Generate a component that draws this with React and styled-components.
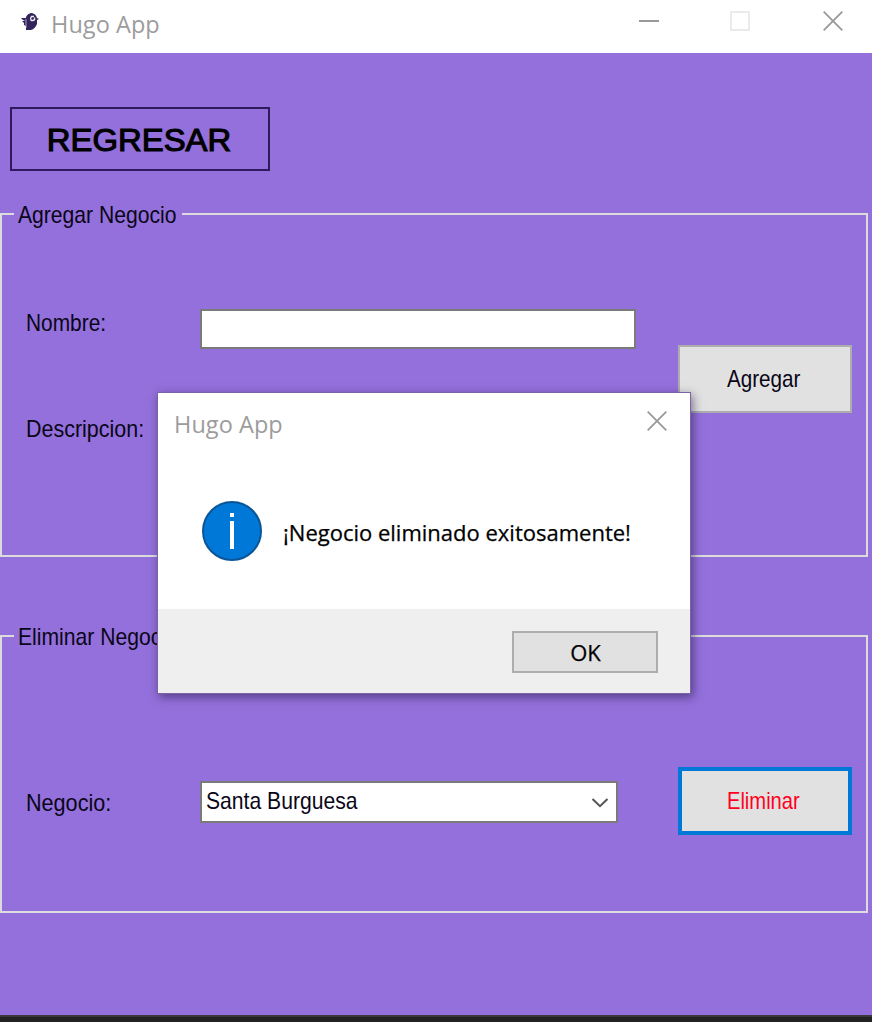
import React from "react";
import styled, { createGlobalStyle } from "styled-components";

const GlobalStyle = createGlobalStyle`
  * { box-sizing: border-box; }
  body { margin: 0; background: #9370db; overflow: hidden; }
  button, input { font: inherit; margin: 0; border-radius: 0; }
`;

const formFont = `"Liberation Sans", Arial, sans-serif`;
const uiFont = `"Open Sans", "Noto Sans", sans-serif`;

const Window = styled.div`
  position: relative;
  display: flex;
  flex-direction: column;
  width: 872px;
  height: 1022px;
  overflow: hidden;
  background: #9370db;
`;

const TitleBar = styled.header`
  display: flex;
  align-items: center;
  flex: none;
  height: ${(p) => p.$height}px;
  padding: ${(p) => p.$padding};
  background: #fff;
`;

const Title = styled.span`
  flex: 1;
  padding: ${(p) => p.$padding};
  font: 400 23.5px/32px ${uiFont};
  letter-spacing: 0.05px;
  color: #9c9c9c;
  white-space: nowrap;
`;

const Controls = styled.div`
  display: flex;
  align-items: center;
`;

const Icon = styled.svg`
  display: block;
  flex: none;
  margin: ${(p) => p.$margin || 0};
`;

const Text = styled.span`
  display: inline-block;
  white-space: nowrap;
  transform: scaleX(${(p) => p.$scale || 0.88});
  transform-origin: ${(p) => p.$origin || "left"} center;
`;

const Content = styled.main`
  display: flex;
  flex-direction: column;
  flex: 1;
  padding-top: 54px;
  font: 24px/28px ${formFont};
  color: #0a0618;
`;

const BackButton = styled.button`
  width: 260px;
  height: 64px;
  margin-left: 10px;
  padding: 4px 2px 0 0;
  flex: none;
  border: 2px solid #2e1a5c;
  background: transparent;
  font-size: 31px;
  line-height: 36px;
  color: #000;
  -webkit-text-stroke: 1.1px #000;
`;

const Group = styled.fieldset`
  width: 868px;
  height: ${(p) => p.$height}px;
  margin: ${(p) => p.$top}px 0 0;
  padding: 0;
  min-width: 0;
  border: 2px solid #dcdcdc;
`;

const Legend = styled.legend`
  width: 168px;
  height: 28px;
  margin-left: 12px;
  padding: 0 0 0 4px;
  line-height: 30px;
`;

const Row = styled.div`
  display: flex;
  align-items: flex-start;
  padding: ${(p) => p.$top}px 14px 0 24px;
`;

const Fields = styled.div`
  display: flex;
  flex-direction: column;
  flex: 1;
  gap: 66px;
`;

const Field = styled.div`
  display: grid;
  grid-template-columns: 174px auto;
  justify-content: start;
  align-items: start;
`;

const Label = styled.label`
  padding-top: ${(p) => p.$top || 0}px;
`;

const Input = styled.input`
  width: 436px;
  height: 40px;
  border: 2px solid #7a7a7a;
  background: #fff;
  outline: none;
`;

const Select = styled.div`
  display: flex;
  align-items: center;
  justify-content: space-between;
  width: 418px;
  height: 42px;
  margin-top: 14px;
  padding: 0 6px 2px 4px;
  border: 2px solid #7a7a7a;
  background: #fff;
`;

const Button = styled.button`
  flex: none;
  width: ${(p) => p.$width || 174}px;
  height: ${(p) => p.$height || 68}px;
  margin-top: ${(p) => p.$top || 0}px;
  padding: 0 3px 0 0;
  border: ${(p) => (p.$focused ? "4px solid #0078d7" : "2px solid #adadad")};
  background: #e1e1e1;
  color: ${(p) => p.$color || "#0a0618"};
`;

const Desktop = styled.div`
  flex: none;
  height: 7px;
  border-top: 2px solid #3a3838;
  background: #222;
`;

const Dialog = styled.section`
  position: absolute;
  left: 157px;
  top: 392px;
  display: flex;
  flex-direction: column;
  width: 534px;
  height: 302px;
  border: 1px solid #7a62a6;
  background: #fff;
  box-shadow: 2px 3px 9px rgba(20, 10, 45, 0.5);
`;

const Message = styled.div`
  display: flex;
  align-items: flex-start;
  flex: 1;
  padding: 48px 0 0 44px;
  gap: 21px;
  font: 22px/30px ${uiFont};
  color: #000;
`;

const MessageText = styled.p`
  margin: 16px 0 0;
  white-space: nowrap;
  -webkit-text-stroke: 0.25px #000;
`;

const Footer = styled.footer`
  display: flex;
  justify-content: flex-end;
  flex: none;
  height: 84px;
  padding: 22px 32px 0 0;
  background: #efefef;
  font: 22px/30px ${uiFont};
`;

const OkButton = styled(Button)`
  padding: 0 0 0 1px;
  -webkit-text-stroke: 0.25px #000;
`;

const Cross = () => (
  <Icon width="20" height="20" viewBox="0 0 20 20" fill="none" stroke="#999" strokeWidth="1.8">
    <path d="M.7.7 19.3 19.3M19.3.7.7 19.3" />
  </Icon>
);

const Bird = () => (
  <Icon width="20" height="20" viewBox="0 0 20 20" $margin="3px 0 0">
    <path fill="#35245c" d="M6 5Q8 1 12 1Q16 2 17 6L19 7L17 8V12Q15 17 11 18H6V14L4 13V11L2 9H5L1.5 7V6H6Z" />
    <path d="M6 7V16" stroke="#c9c3d8" strokeWidth=".8" />
    <path d="M14 4.5H11.5Q10 6 11 8.3Q13.5 9 14.6 7.5V5.5" fill="none" stroke="#eee" strokeWidth="1.3" />
  </Icon>
);

export default function App() {
  return (
    <Window>
      <GlobalStyle />
      <TitleBar $height={53} $padding="0 29px 12px 20px">
        <Bird />
        <Title $padding="6px 0 0 11px">Hugo App</Title>
        <Controls>
          <Icon width="20" height="20" $margin="0 71px 0 0">
            <path d="M0 10H20" stroke="#999" strokeWidth="2" />
          </Icon>
          <Icon width="20" height="20" fill="none" $margin="0 73px 0 0">
            <rect x="1" y="1" width="18" height="18" stroke="#ebebeb" strokeWidth="2" />
          </Icon>
          <Cross />
        </Controls>
      </TitleBar>

      <Content>
        <BackButton><Text $scale={1.06} $origin="center">REGRESAR</Text></BackButton>

        <Group $top={29} $height={357}>
          <Legend><Text>Agregar Negocio</Text></Legend>
          <Row $top={81}>
            <Fields>
              <Field>
                <Label><Text $scale={0.87}>Nombre:</Text></Label>
                <Input />
              </Field>
              <Field>
                <Label><Text $scale={0.895}>Descripcion:</Text></Label>
              </Field>
            </Fields>
            <Button $top={36}><Text $origin="center" $scale={0.86}>Agregar</Text></Button>
          </Row>
        </Group>

        <Group $top={65} $height={291}>
          <Legend><Text>Eliminar Negocio</Text></Legend>
          <Row $top={117}>
            <Fields>
              <Field>
                <Label $top={22}><Text $scale={0.9}>Negocio:</Text></Label>
                <Select>
                  <Text>Santa Burguesa</Text>
                  <Icon width="20" height="12" viewBox="0 0 20 12" fill="none" $margin="3px 0 0">
                    <path d="M2.5 2 10 9.2 17.5 2" stroke="#555" strokeWidth="2" />
                  </Icon>
                </Select>
              </Field>
            </Fields>
            <Button $focused $color="#ff0022"><Text $origin="center" $scale={0.84}>Eliminar</Text></Button>
          </Row>
        </Group>
      </Content>
      <Desktop />

      <Dialog role="dialog">
        <TitleBar $height={60} $padding="0 23px 4px 16px">
          <Title $padding="5px 0 0">Hugo App</Title>
          <Cross />
        </TitleBar>
        <Message>
          <Icon width="60" height="60">
            <circle cx="30" cy="30" r="29" fill="#0078d7" stroke="#0b5596" strokeWidth="2" />
            <path d="M28 12H32V16H28ZM28 20H32V48H28Z" fill="#fff" />
          </Icon>
          <MessageText>¡Negocio eliminado exitosamente!</MessageText>
        </Message>
        <Footer>
          <OkButton $width={146} $height={42} $color="#000">OK</OkButton>
        </Footer>
      </Dialog>
    </Window>
  );
}
